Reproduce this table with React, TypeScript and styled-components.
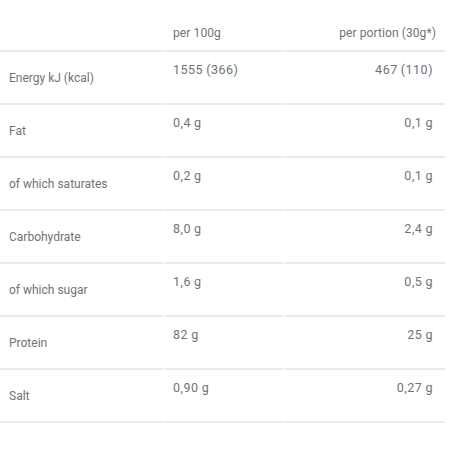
import React from "react";
import styled, { createGlobalStyle } from "styled-components";

const Global = createGlobalStyle`
  html, body { margin: 0; padding: 0; background: #ffffff; }
  body { font-family: "Roboto", "Liberation Sans", sans-serif; }
`;

const Table = styled.div`
  display: grid;
  grid-template-columns: 163px 119px 161px;
  column-gap: 1px;
  width: 445px;
  color: #6d7478;
  font-size: 12px;
  line-height: 14px;
`;

const Cell = styled.div<{ $align?: "left" | "right"; $valign?: "top" | "middle" | "bottom"; $head?: boolean }>`
  display: flex;
  height: ${(p) => (p.$head ? "50px" : "51px")};
  border-bottom: 2px solid #e9eaea;
  box-sizing: content-box;
  padding: 0 ${(p) => (p.$head ? "9px" : "12px")} 0 ${(p) => (p.$align === "right" ? "0" : "9px")};
  justify-content: ${(p) => (p.$align === "right" ? "flex-end" : "flex-start")};
  align-items: ${(p) =>
    p.$valign === "top" ? "flex-start" : p.$valign === "bottom" ? "flex-end" : "center"};
`;

const Label = styled.span`
  display: block;
`;

const Value = styled.span`
  display: block;
  margin-top: 11px;
  font-size: 12.5px;
  letter-spacing: 0.5px;
  word-spacing: -0.5px;
`;

const HeadText = styled.span`
  display: block;
  margin-bottom: 10px;
  letter-spacing: 0.1px;
`;

const rows: [string, string, string][] = [
  ["Energy kJ (kcal)", "1555 (366)", "467 (110)"],
  ["Fat", "0,4 g", "0,1 g"],
  ["of which saturates", "0,2 g", "0,1 g"],
  ["Carbohydrate", "8,0 g", "2,4 g"],
  ["of which sugar", "1,6 g", "0,5 g"],
  ["Protein", "82 g", "25 g"],
  ["Salt", "0,90 g", "0,27 g"],
];

export default function App() {
  return (
    <>
      <Global />
      <Table>
        <Cell $head $valign="bottom" />
        <Cell $head $valign="bottom">
          <HeadText>per 100g</HeadText>
        </Cell>
        <Cell $head $valign="bottom" $align="right">
          <HeadText>per portion (30g*)</HeadText>
        </Cell>
        {rows.map(([label, a, b]) => (
          <React.Fragment key={label}>
            <Cell $valign="middle">
              <Label>{label}</Label>
            </Cell>
            <Cell $valign="top">
              <Value>{a}</Value>
            </Cell>
            <Cell $valign="top" $align="right">
              <Value>{b}</Value>
            </Cell>
          </React.Fragment>
        ))}
      </Table>
    </>
  );
}
